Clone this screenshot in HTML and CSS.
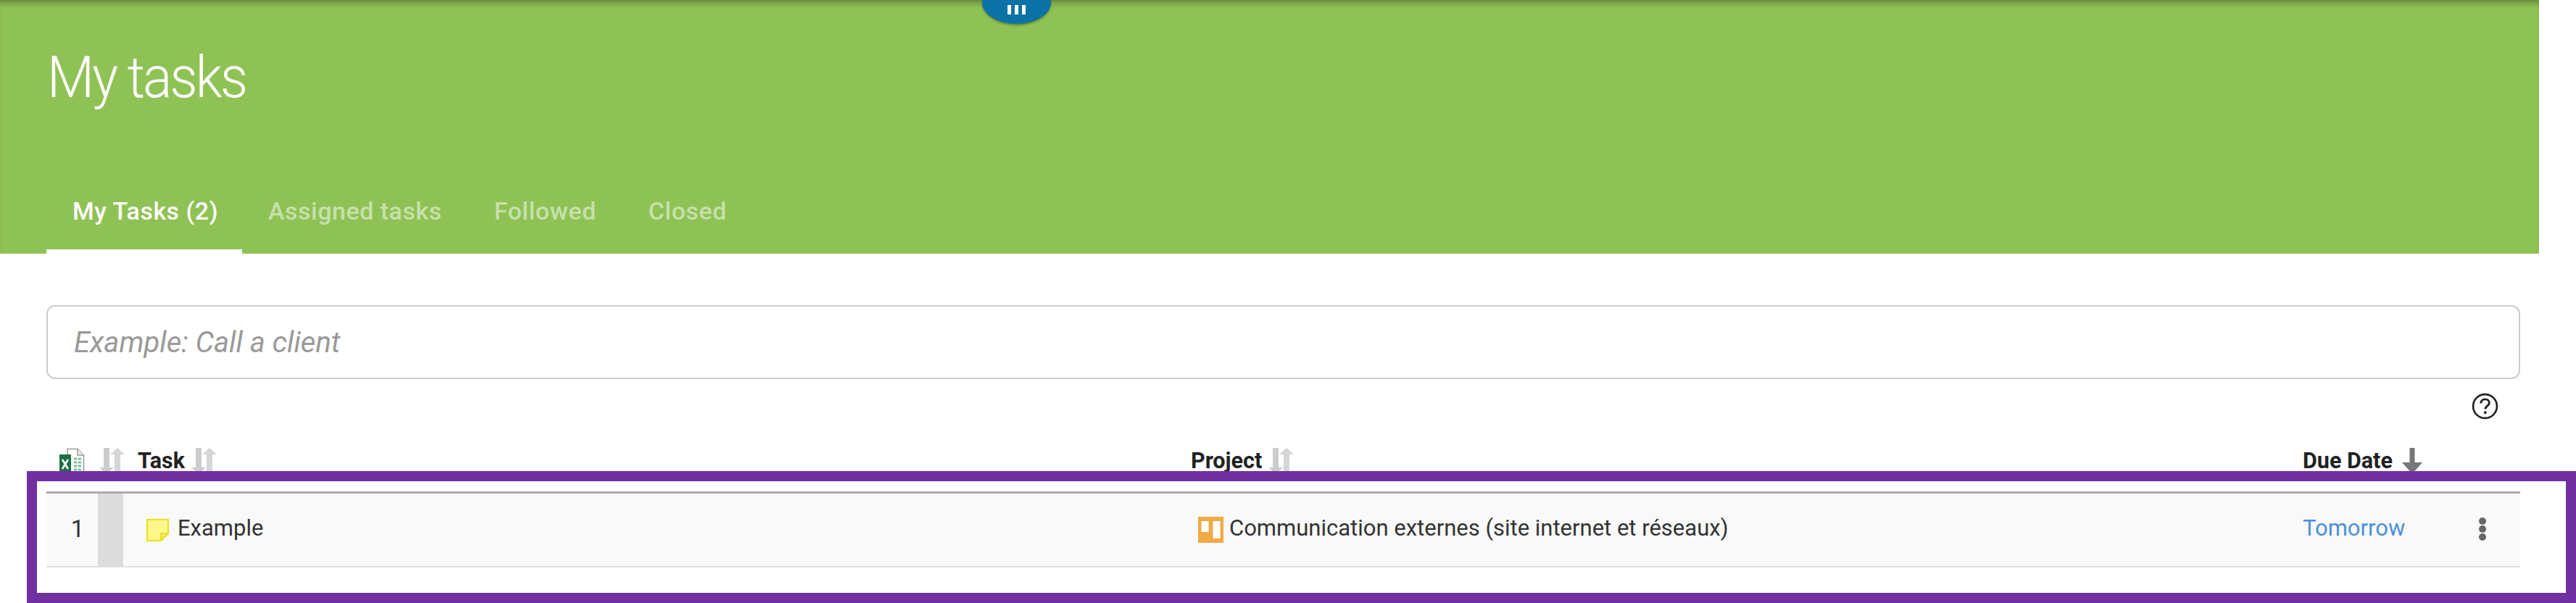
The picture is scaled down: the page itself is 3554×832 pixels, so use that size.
FILE: index.html
```html
<!DOCTYPE html>
<html lang="en">
<head>
    <meta charset="UTF-8">
    <title>My tasks</title>
    <link rel="stylesheet" href="styles.css">
</head>
<body>
    <div class="page">
        <div class="banner">
            <h1>My tasks</h1>
            <div class="tabs">
                <a class="tab active">My Tasks (2)</a>
                <a class="tab">Assigned tasks</a>
                <a class="tab">Followed</a>
                <a class="tab">Closed</a>
            </div>
        </div>

        <div class="content">
            <input class="quick-add" type="text" placeholder="Example: Call a client">

            <div class="help-row">
                <svg class="help" viewBox="0 0 36 36">
                    <circle cx="18" cy="18" r="16" fill="none" stroke="#222" stroke-width="2.6"/>
                    <path d="M12.5 14c0-3.4 2.5-5.4 5.7-5.4 3.200 0 5.500 2 5.500 4.800 0 4.200-5.400 4.400-5.400 8.600" fill="none" stroke="#222" stroke-width="2.800"/>
                    <circle cx="18.300" cy="26.500" r="1.900" fill="#222"/>
                </svg>
            </div>

            <div class="grid head">
                <div class="cell-tools">
                    <svg class="excel" viewBox="0 0 35 36">
                        <path d="M11 1.500h14l8.500 8.500v24H11z" fill="#fff" stroke="#999" stroke-width="1.500"/>
                        <path d="M25 1.500V10h8.500" fill="#eee" stroke="#999" stroke-width="1.500"/>
                        <path d="M20 15h10M20 20h10M20 25h10M20 30h10" stroke="#7cc096" stroke-width="3"/>
                        <path d="M25 13v19" stroke="#fff" stroke-width="1.500"/>
                        <rect x="0" y="9" width="16" height="27" fill="#1d6f42"/>
                        <path d="M4 16l8 13M12 16L4 29" stroke="#fff" stroke-width="2.600"/>
                    </svg>
                    <svg class="sort" viewBox="0 0 35 36"><use href="#sort-arrows"/></svg>
                </div>
                <div class="cell-title">Task <svg class="sort" viewBox="0 0 35 36"><use href="#sort-arrows"/></svg></div>
                <div class="cell-title">Project <svg class="sort" viewBox="0 0 35 36"><use href="#sort-arrows"/></svg></div>
                <div class="cell-title">Due Date
                    <svg class="sort-down" viewBox="0 0 28 36"><path d="M10.500 0h7v20H28L14 36 0 20h10.500z" fill="#777"/></svg>
                </div>
            </div>

            <div class="grid task-row">
                <div class="num-cell">
                    <span class="num">1</span>
                    <span class="stripe"></span>
                </div>
                <div class="name-cell">
                    <svg class="note" viewBox="0 0 31 31">
                        <path d="M1 1h29v19L20 30H1z" fill="#fdf88a" stroke="#eadf1e" stroke-width="2"/>
                        <path d="M30 20H20v10z" fill="#f2e96a" stroke="#eadf1e" stroke-width="2"/>
                    </svg>
                    <span class="label">Example</span>
                </div>
                <div class="project-cell">
                    <svg class="board" viewBox="0 0 35 36">
                        <rect width="35" height="36" fill="#f0ab45"/>
                        <rect x="4.500" y="6" width="10" height="15" rx="1" fill="#fff"/>
                        <rect x="20.500" y="6" width="10" height="24" rx="1" fill="#fff"/>
                    </svg>
                    <span class="label">Communication externes (site internet et réseaux)</span>
                </div>
                <div class="due-cell">
                    <a class="due label">Tomorrow</a>
                    <span class="dots"><i></i><i></i><i></i></span>
                </div>
            </div>
        </div>
    </div>

    <svg class="defs" width="0" height="0">
        <symbol id="sort-arrows" viewBox="0 0 35 36">
            <path d="M6 0h8v27h6L10 36 0 27h6z" fill="#ccc"/>
            <path d="M25 0l10 9h-6v27h-8V9h-6z" fill="#d6d6d6"/>
        </symbol>
    </svg>

    <div class="handle"><i></i><i></i><i></i></div>
    <div class="frame"></div>
</body>
</html>
```

FILE: styles.css
```css
* {
    box-sizing: border-box;
    margin: 0;
    padding: 0;
}

html, body {
    height: 832px;
    overflow: hidden;
}

body {
    background: white;
    color: #333;
    font-family: Roboto, sans-serif;
    position: relative;
}

.page {
    width: 3503px;
}

.banner {
    background: #8fc255;
    height: 350px;
    padding: 60px 0 0 64px;
    box-shadow: inset 0 10px 8px -6px rgba(60,80,30,0.55);
    display: flex;
    flex-direction: column;
}

h1 {
    color: white;
    font-weight: 300;
    font-size: 80px;
    line-height: 94px;
    margin-left: 1px;
    letter-spacing: -3px;
    transform: scaleX(0.94);
    transform-origin: left;
}

.tabs {
    display: flex;
    margin-top: auto;
}

.tab {
    color: rgba(255,255,255,0.5);
    font-size: 34px;
    font-weight: 500;
    letter-spacing: 0.5px;
    line-height: 40px;
    padding: 0 36px 33px;
    border-bottom: 6px solid transparent;
}

.tab.active {
    color: white;
    border-bottom-color: white;
    padding-right: 33px;
}

.content {
    padding: 71px 26px 0 64px;
}

.quick-add {
    display: block;
    width: 100%;
    height: 102px;
    border: 2px solid #ccc;
    border-radius: 12px;
    padding: 0 36px;
    font: italic 40px Roboto, sans-serif;
    outline: none;
}

.quick-add::placeholder {
    color: #999;
}

.help-row {
    display: flex;
    justify-content: flex-end;
    padding: 19px 30px 0 0;
    height: 95px;
}

.help {
    width: 37px;
    height: 37px;
}

.grid {
    display: grid;
    grid-template-columns: 106px 1473px 1534px 1fr;
}

.head {
    height: 42px;
    font-weight: 700;
    font-size: 30.5px;
    color: #222;
}

.cell-tools {
    display: flex;
    align-items: flex-start;
    gap: 20px;
    padding-left: 18px;
}

.cell-title {
    display: flex;
    align-items: flex-start;
    gap: 9px;
    line-height: 36px;
}

.cell-title:nth-child(2) {
    padding-left: 20px;
}

.excel, .sort, .sort-down {
    width: 35px;
    height: 36px;
    flex: none;
}

.sort-down {
    width: 28px;
    margin-left: 4px;
}

.defs {
    position: absolute;
}

.task-row {
    background: #f9f9f9;
    border-top: 3px solid #aaa;
    border-bottom: 2px solid #e0e0e0;
    height: 105px;
    font-size: 31px;
    color: #333;
    margin-top: 18px;
}

.label {
    margin-bottom: 5px;
}

.num-cell {
    display: flex;
    justify-content: flex-end;
}

.num {
    flex: 1;
    text-align: center;
    align-self: center;
    padding-left: 15px;
    font-size: 33px;
    margin-bottom: 4px;
}

.stripe {
    width: 35px;
    background: #dcdcdc;
}

.name-cell, .project-cell {
    display: flex;
    align-items: center;
    gap: 12px;
}

.name-cell {
    padding-left: 32px;
}

.project-cell {
    padding-left: 10px;
    gap: 8px;
}

.note {
    width: 31px;
    height: 31px;
}

.board {
    width: 35px;
    height: 36px;
}

.due-cell {
    display: flex;
    align-items: center;
    justify-content: space-between;
    padding-right: 47px;
}

.due {
    color: #4a90d9;
}

.dots {
    display: flex;
    flex-direction: column;
    gap: 1px;
    margin-bottom: 2px;
}

.dots i {
    display: block;
    width: 10px;
    height: 10px;
    border-radius: 50%;
    background: #666;
}

/* pull-down tab over the top of the banner */
.handle {
    position: absolute;
    top: 0;
    left: 1355px;
    width: 95px;
    height: 33px;
    background: #0a72a4;
    border-radius: 0 0 48px 48px / 0 0 30px 30px;
    box-shadow: 0 2px 3px rgba(50,70,20,0.5);
    display: flex;
    justify-content: center;
    gap: 5px;
    padding-top: 7px;
}

.handle i {
    display: block;
    width: 5px;
    height: 13px;
    background: white;
}

/* annotation rectangle drawn over the screenshot */
.frame {
    position: absolute;
    top: 650px;
    left: 37px;
    width: 3517px;
    height: 182px;
    border: 14px solid #7030a0;
}
```
